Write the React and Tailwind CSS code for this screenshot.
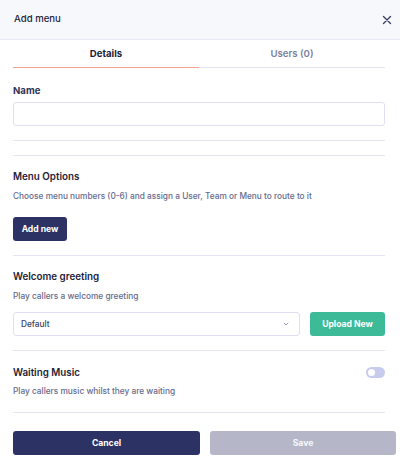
import React from 'react';

const Divider = () => <div className="h-px bg-[#e4e5f4]" />;

const App = () => {
  return (
    <div className="w-[400px] h-[463px] bg-white font-['Inter',sans-serif] text-[#1f2238] overflow-hidden">
      {/* Header */}
      <div className="h-[40px] bg-[#f7f8fc] border-b border-[#e8e9f5] flex items-center justify-between pl-[14px] pr-[8px]">
        <span className="text-[9.6px] font-medium">Add menu</span>
        <svg width="10" height="10" viewBox="0 0 10 10" className="text-[#3b3f63]">
          <path d="M1.5 1.5l7 7M8.5 1.5l-7 7" stroke="currentColor" strokeWidth="1.4" strokeLinecap="round" />
        </svg>
      </div>

      <div className="pl-[13px] pr-[15px]">
        {/* Tabs */}
        <div className="flex border-b border-[#e4e5f4] pt-[8px]">
          <div className="flex-1 text-center text-[9.6px] leading-[12px] font-bold pb-[7px] border-b-[1.5px] border-[#f4a08e] -mb-px">
            Details
          </div>
          <div className="flex-1 text-center text-[9.6px] leading-[12px] font-semibold text-[#7c7fa0] pb-[7px]">
            Users (0)
          </div>
        </div>

        {/* Name */}
        <div className="pt-[17px]">
          <div className="text-[9.6px] leading-[12px] font-bold text-[#2f3358]">Name</div>
          <div className="mt-[5px] h-[24px] rounded-[3px] border border-[#dfe0f4]" />
        </div>

        <div className="mt-[14px]"><Divider /></div>
        <div className="mt-[14px]"><Divider /></div>

        {/* Menu Options */}
        <div className="pt-[14px]">
          <div className="text-[9.8px] leading-[14px] font-semibold">Menu Options</div>
          <div className="mt-[6px] text-[8.3px] leading-[12px] font-medium text-[#666a8e]">
            Choose menu numbers (0-6) and assign a User, Team or Menu to route to it
          </div>
          <button className="mt-[15px] h-[24px] w-[54px] rounded-[3px] bg-[#2d3264] text-white text-[8.6px] font-bold block">
            Add new
          </button>
        </div>

        <div className="mt-[14px]"><Divider /></div>

        {/* Welcome greeting */}
        <div className="pt-[14px]">
          <div className="text-[9.8px] leading-[14px] font-semibold">Welcome greeting</div>
          <div className="mt-[6px] text-[8.3px] leading-[12px] font-medium text-[#666a8e]">
            Play callers a welcome greeting
          </div>
          <div className="mt-[10px] flex gap-[10px]">
            <div className="flex-1 h-[24px] rounded-[3px] border border-[#dfe0f4] flex items-center justify-between pl-[7px] pr-[10px]">
              <span className="text-[8.3px] font-medium text-[#3b3f5e]">Default</span>
              <svg width="6" height="4" viewBox="0 0 6 4">
                <path d="M0.8 0.8L3 3L5.2 0.8" fill="none" stroke="#8a8da8" strokeWidth="0.9" />
              </svg>
            </div>
            <button className="w-[75px] h-[24px] rounded-[3px] bg-[#3dba98] text-white text-[8.6px] font-bold">
              Upload New
            </button>
          </div>
        </div>

        <div className="mt-[14px]"><Divider /></div>

        {/* Waiting Music */}
        <div className="pt-[15px]">
          <div className="flex items-center justify-between h-[14px]">
            <span className="text-[9.8px] leading-[14px] font-semibold">Waiting Music</span>
            <div className="w-[19px] h-[11px] rounded-full bg-[#c8cbee] flex items-center pl-[2px] -mt-[2px]">
              <div className="w-[7px] h-[7px] rounded-full bg-white" />
            </div>
          </div>
          <div className="mt-[5px] text-[8.3px] leading-[12px] font-medium text-[#666a8e]">
            Play callers music whilst they are waiting
          </div>
        </div>

        <div className="mt-[15px]"><Divider /></div>
      </div>

      {/* Footer buttons */}
      <div className="flex gap-[10px] pl-[13px] pr-[4px] mt-[18px]">
        <button className="w-[187px] h-[24px] rounded-[3px] bg-[#2d3264] text-white text-[8.6px] font-bold">
          Cancel
        </button>
        <button className="flex-1 h-[24px] rounded-[3px] bg-[#b5b7c9] text-white/90 text-[8.6px] font-bold">
          Save
        </button>
      </div>
    </div>
  );
};

export default App;
